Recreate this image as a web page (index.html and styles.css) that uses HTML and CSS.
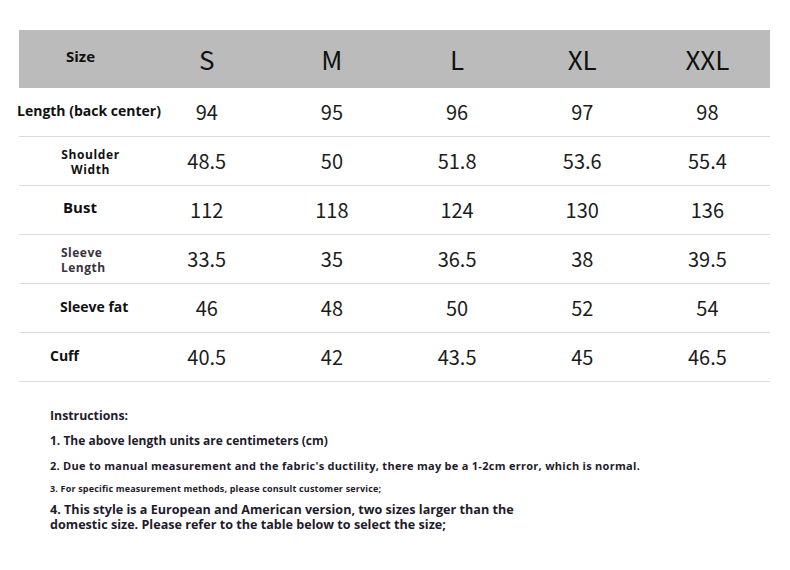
FILE: index.html
```html
<!DOCTYPE html>
<html>
<head>
<meta charset="utf-8">
<link rel="stylesheet" href="styles.css">
</head>
<body>
<div class="page">
  <div class="table">
    <div class="row head">
      <div class="lab lab-size">Size</div>
      <div class="cell">S</div><div class="cell">M</div><div class="cell">L</div><div class="cell">XL</div><div class="cell">XXL</div>
    </div>
    <div class="row">
      <div class="lab lab-length">Length (back center)</div>
      <div class="cell">94</div><div class="cell">95</div><div class="cell">96</div><div class="cell">97</div><div class="cell">98</div>
    </div>
    <div class="row">
      <div class="lab lab-shoulder">Shoulder<br>Width</div>
      <div class="cell">48.5</div><div class="cell">50</div><div class="cell">51.8</div><div class="cell">53.6</div><div class="cell">55.4</div>
    </div>
    <div class="row">
      <div class="lab lab-bust">Bust</div>
      <div class="cell">112</div><div class="cell">118</div><div class="cell">124</div><div class="cell">130</div><div class="cell">136</div>
    </div>
    <div class="row">
      <div class="lab lab-sleeve">Sleeve<br>Length</div>
      <div class="cell">33.5</div><div class="cell">35</div><div class="cell">36.5</div><div class="cell">38</div><div class="cell">39.5</div>
    </div>
    <div class="row">
      <div class="lab lab-fat">Sleeve fat</div>
      <div class="cell">46</div><div class="cell">48</div><div class="cell">50</div><div class="cell">52</div><div class="cell">54</div>
    </div>
    <div class="row">
      <div class="lab lab-cuff">Cuff</div>
      <div class="cell">40.5</div><div class="cell">42</div><div class="cell">43.5</div><div class="cell">45</div><div class="cell">46.5</div>
    </div>
  </div>
  <div class="notes">
    <p class="n-title">Instructions:</p>
    <p class="n1">1. The above length units are centimeters (cm)</p>
    <p class="n2">2. Due to manual measurement and the fabric's ductility, there may be a 1-2cm error, which is normal.</p>
    <p class="n3">3. For specific measurement methods, please consult customer service;</p>
    <p class="n4">4. This style is a European and American version, two sizes larger than the<br>domestic size. Please refer to the table below to select the size;</p>
  </div>
</div>
</body>
</html>
```
FILE: styles.css
```css
* { box-sizing: border-box; }
html, body { margin: 0; padding: 0; background: #ffffff; }
.page { width: 790px; height: 570px; padding: 30px 20px 0 19px; }
.table { width: 751px; }
.row {
  display: grid;
  grid-template-columns: repeat(6, minmax(0, 1fr));
  height: 49px;
  border-bottom: 1px solid #dcdcdc;
  align-items: center;
}
.row.head { height: 58px; background: #bbbbbb; border-bottom: none; }
.cell {
  text-align: center;
  font-family: "Noto Sans CJK SC", "Noto Sans", sans-serif;
  font-weight: 400;
  font-size: 20px;
  color: #1c1c1c;
  line-height: 1;
}
.head .cell { font-size: 26px; color: #111111; }
.lab {
  font-family: "Open Sans", "Noto Sans", sans-serif;
  font-weight: 700;
  color: #111111;
  font-size: 14px;
  line-height: 1;
  white-space: nowrap;
  margin-top: -4px;
}
.lab-size { padding-left: 47px; font-size: 15px; margin-top: -6px; }
.lab-length { margin-left: -2px; font-size: 14px; margin-top: -2px; }
.lab-shoulder { font-size: 12px; letter-spacing: 0.6px; text-align: center; width: 125px; padding-left: 18px; line-height: 15px; margin-top: 2px; }
.lab-bust { padding-left: 44px; font-size: 15px; margin-top: -6px; }
.lab-sleeve { padding-left: 42px; font-size: 12px; letter-spacing: 0.5px; color: #3a3140; line-height: 15px; margin-top: 2px; }
.lab-fat { padding-left: 41px; font-size: 14px; margin-top: -2px; }
.lab-cuff { padding-left: 31px; font-size: 14px; margin-top: -2px; }
.notes {
  padding-left: 31px;
  padding-top: 28px;
  font-family: "Open Sans", "Noto Sans", sans-serif;
  font-weight: 700;
  color: #241a2c;
}
.notes p { margin: 0; line-height: 1; white-space: nowrap; }
.n-title { font-size: 12.3px; }
.n1 { font-size: 12px; margin-top: 13px !important; }
.n2 { font-size: 11px; letter-spacing: 0.28px; margin-top: 13px !important; }
.n3 { font-size: 9px; letter-spacing: 0.17px; margin-top: 13px !important; }
.n4 { font-size: 12.6px; margin-top: 9px !important; line-height: 15px !important; }
```
